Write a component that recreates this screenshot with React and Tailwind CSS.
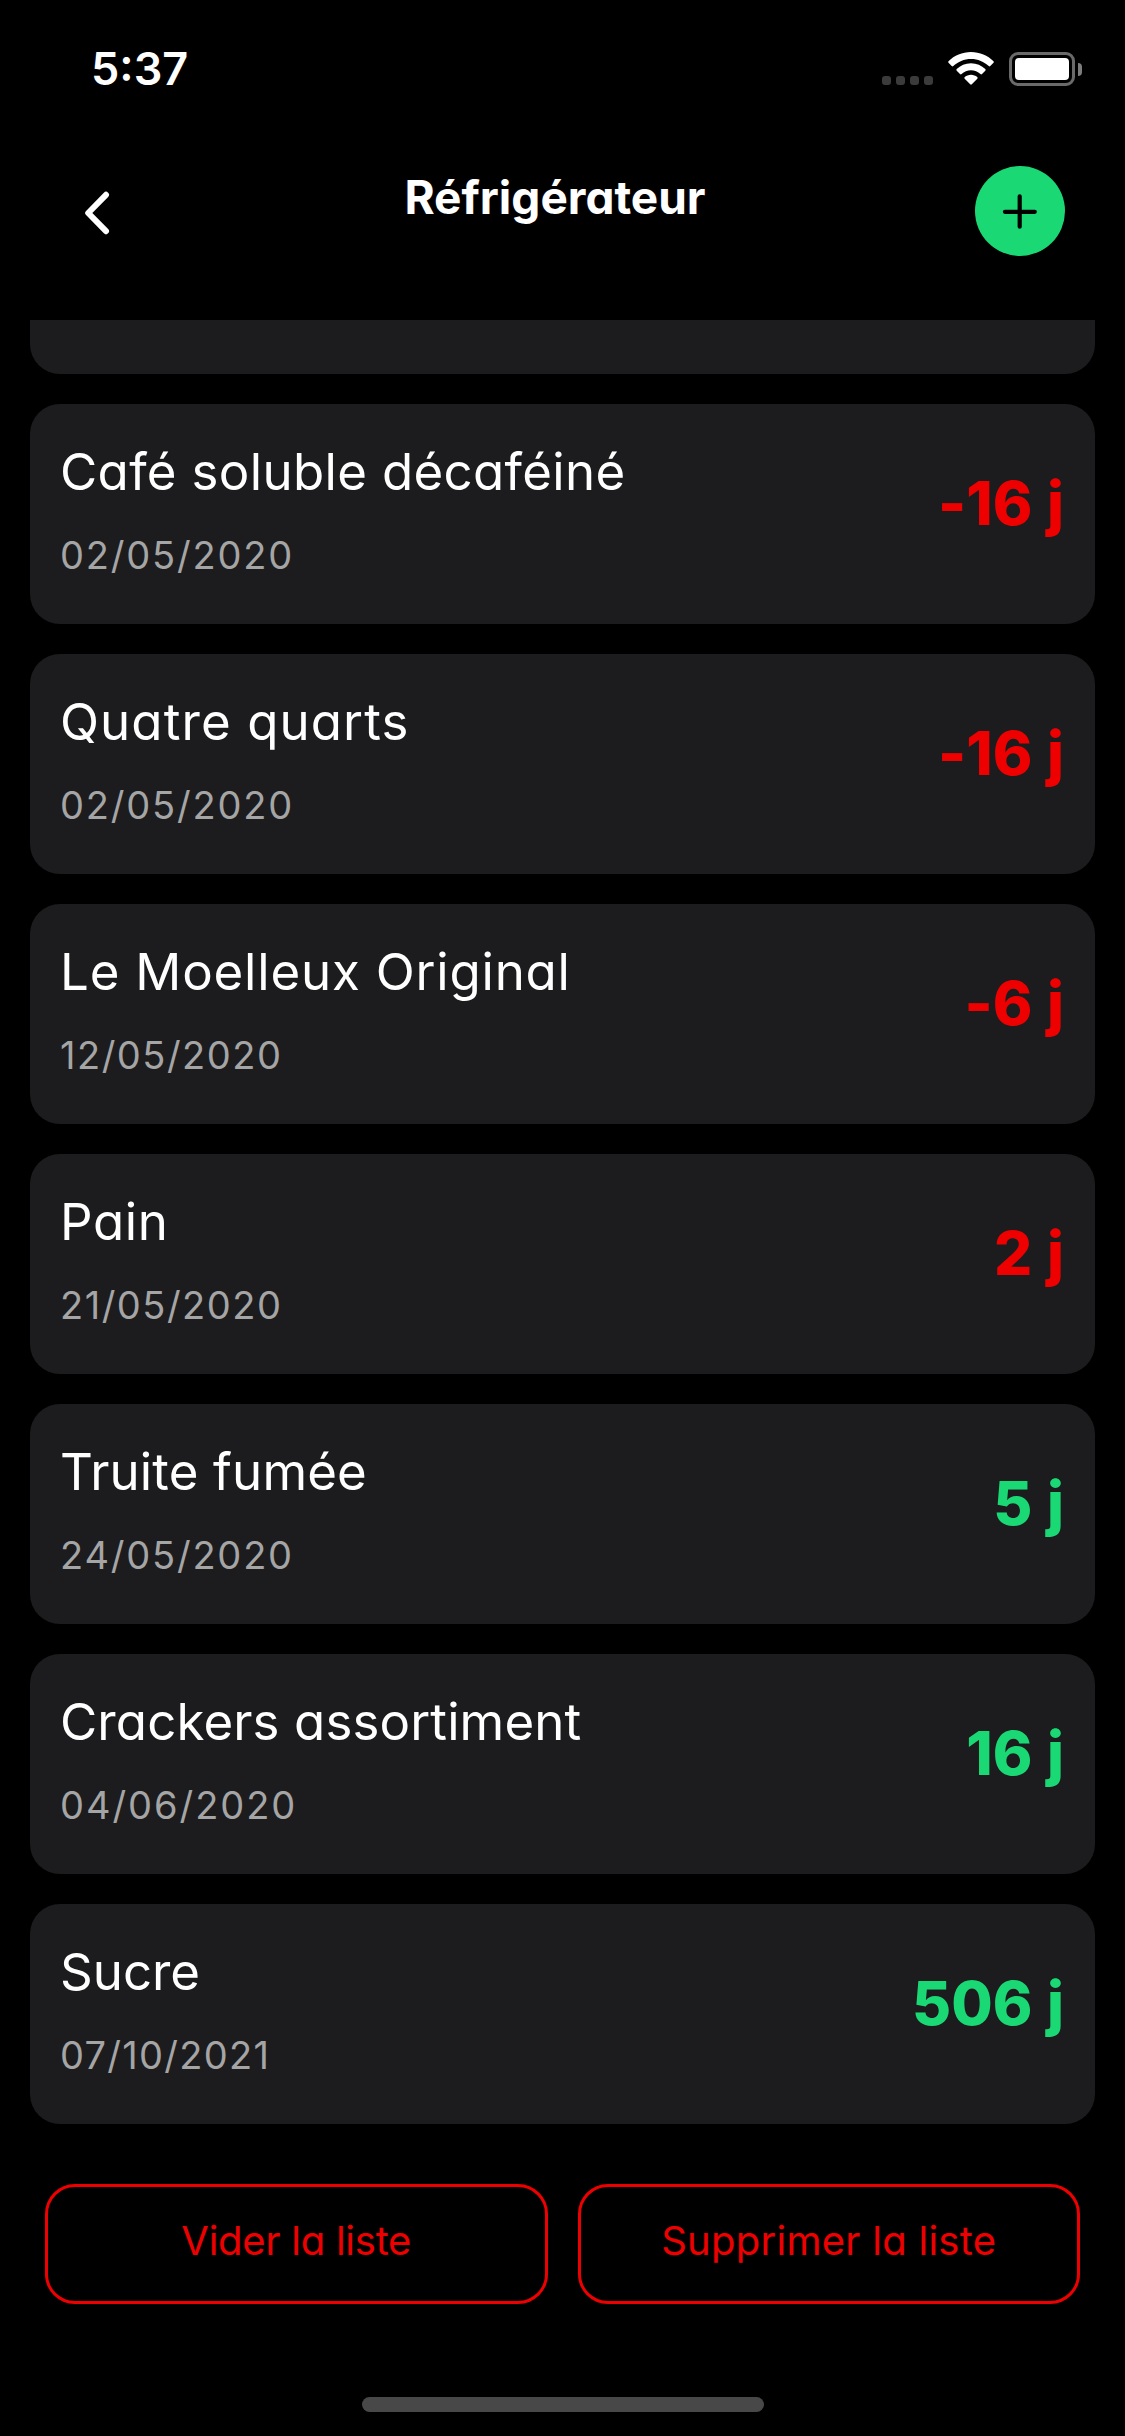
import React from "react";

const ITEMS = [
  { name: "Café soluble décaféiné", date: "02/05/2020", days: "-16 j", late: true, nameTracking: "tracking-[0.33px]", dateTracking: "tracking-[1.8px]" },
  { name: "Quatre quarts", date: "02/05/2020", days: "-16 j", late: true, nameTracking: "tracking-[1.1px]", dateTracking: "tracking-[1.8px]" },
  { name: "Le Moelleux Original", date: "12/05/2020", days: "-6 j", late: true, nameTracking: "tracking-[0.8px]", dateTracking: "tracking-[1.5px]" },
  { name: "Pain", date: "21/05/2020", days: "2 j", late: true, nameTracking: "tracking-[0.6px]", dateTracking: "tracking-[1.5px]" },
  { name: "Truite fumée", date: "24/05/2020", days: "5 j", late: false, nameTracking: "tracking-[0.15px]", dateTracking: "tracking-[1.8px]" },
  { name: "Crackers assortiment", date: "04/06/2020", days: "16 j", late: false, nameTracking: "tracking-[0.12px]", dateTracking: "tracking-[1.95px]" },
  { name: "Sucre", date: "07/10/2021", days: "506 j", late: false, nameTracking: "tracking-normal", dateTracking: "tracking-[1.3px]" },
];

function StatusBar() {
  return (
    <div className="flex h-[138px] items-start justify-between pt-[42px] pr-[43px] pl-[91px]">
      <span className="text-[45px] leading-[54px] font-semibold">5:37</span>
      <div className="flex items-start pt-[10px]">
        <div className="mt-[24px] mr-[15px] flex gap-[5px]">
          {[0, 1, 2, 3].map((i) => (
            <span key={i} className="h-[9px] w-[9px] rounded-[3px] bg-[#3b3b3b]" />
          ))}
        </div>
        <svg className="mr-[15px] h-[33px] w-[46px]" viewBox="0 0 46 33" fill="#fff">
          <path d="M23 0C14.2 0 6.300 3.500 .5 9.200C0 9.700 0 10.300 .5 10.800L3.700 14C4.200 14.500 4.800 14.500 5.300 14C9.900 9.600 16.100 6.900 23 6.900S36.100 9.600 40.700 14C41.200 14.500 41.800 14.500 42.300 14L45.500 10.800C46 10.300 46 9.700 45.500 9.200C39.700 3.500 31.800 0 23 0Z" />
          <path d="M23 11.300C17.400 11.300 12.400 13.500 8.700 17.100C8.200 17.600 8.200 18.200 8.700 18.700L12 22C12.500 22.500 13.100 22.500 13.600 22C16.100 19.700 19.400 18.200 23 18.200S29.900 19.700 32.400 22C32.900 22.500 33.500 22.500 34 22L37.300 18.700C37.800 18.200 37.800 17.600 37.300 17.100C33.600 13.500 28.600 11.300 23 11.300Z" />
          <path d="M23 22.800C20.600 22.800 18.400 23.700 16.800 25.100C16.200 25.700 16.200 26.200 16.700 26.700L22.200 32.300C22.700 32.800 23.300 32.800 23.800 32.300L29.300 26.700C29.800 26.200 29.800 25.700 29.200 25.100C27.600 23.700 25.400 22.800 23 22.800Z" />
        </svg>
        <div className="flex items-center">
          <div className="h-[34px] w-[66px] rounded-[9px] border-[3px] border-[#6a6a6a] p-[3px]">
            <div className="h-full w-full rounded-[4px] bg-white" />
          </div>
          <div className="ml-[3px] h-[13px] w-[4px] rounded-r-full bg-[#7d7d7d]" />
        </div>
      </div>
    </div>
  );
}

function Header() {
  return (
    <div className="flex h-[182px] items-start pt-[28px] pr-[60px]">
      <svg className="mt-[22px] ml-[82px] h-[50px] w-[28px]" viewBox="0 0 28 50" fill="none" stroke="#fff" strokeWidth="6" strokeLinecap="round" strokeLinejoin="round">
        <path d="M24 6.800L6.200 25L24 43.200" />
      </svg>
      <h1 className="mt-[3px] ml-[25px] flex-1 text-center text-[46px] leading-[56px] font-bold">Réfrigérateur</h1>
      <button className="flex h-[90px] w-[90px] items-center justify-center rounded-full bg-[#1ad975]">
        <svg className="h-[38px] w-[36px]" viewBox="0 0 36 38" stroke="#000" strokeWidth="4.2" strokeLinecap="round">
          <path d="M17.700 4.300V34.700M2.900 19.800H32.800" />
        </svg>
      </button>
    </div>
  );
}

function Card({ item }) {
  return (
    <div className="flex h-[220px] shrink-0 justify-between rounded-[30px] bg-[#1c1c1e] pr-[31px] pl-[30px]">
      <div className="flex flex-col items-start pt-[38px]">
        <span className={"text-[51px] leading-[60px] text-white " + item.nameTracking}>{item.name}</span>
        <span className={"mt-[30px] text-[38px] leading-[46px] text-[#a5a5a5] " + item.dateTracking}>{item.date}</span>
      </div>
      <div className="flex items-center pb-[22px]">
        <span
          className={
            "text-[60px] leading-[72px] font-extrabold [font-feature-settings:'cv11','calt'_0] [word-spacing:1.5px] " +
            (item.late ? "text-[#ee0000]" : "text-[#1ad975]")
          }
        >
          {item.days}
        </span>
      </div>
    </div>
  );
}

function OutlineButton({ tracking, children }) {
  return (
    <button className={"flex h-[120px] flex-1 justify-center rounded-[30px] border-[3px] border-[#ee0000] pt-[30px] text-[40px] leading-[48px] text-[#ee0000] " + tracking}>
      {children}
    </button>
  );
}

export default function App() {
  return (
    <div className="flex h-[2436px] w-[1125px] flex-col overflow-hidden bg-black font-['Inter',sans-serif] text-white [font-feature-settings:'cv11','ss03']">
      <StatusBar />
      <Header />
      <div className="flex flex-col gap-[30px] px-[30px]">
        <div className="h-[54px] shrink-0 rounded-b-[30px] bg-[#1c1c1e]" />
        {ITEMS.map((item) => (
          <Card key={item.name} item={item} />
        ))}
      </div>
      <div className="mt-[60px] flex gap-[30px] px-[45px]">
        <OutlineButton tracking="tracking-[-0.25px]">Vider la liste</OutlineButton>
        <OutlineButton tracking="tracking-[0.27px]">Supprimer la liste</OutlineButton>
      </div>
      <div className="mt-[93px] h-[15px] w-[402px] self-center rounded-full bg-[#484848]" />
    </div>
  );
}
